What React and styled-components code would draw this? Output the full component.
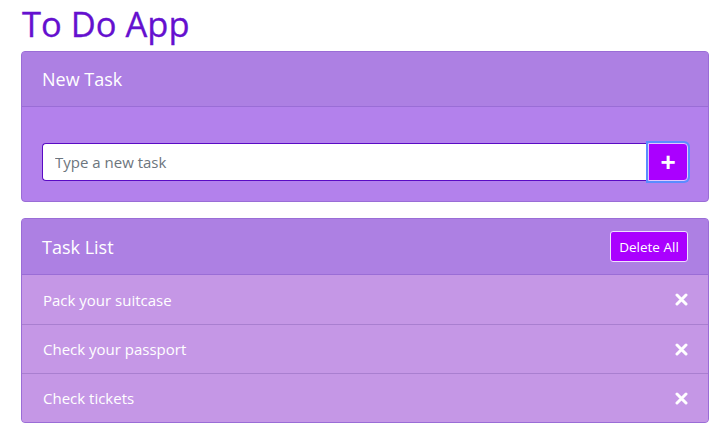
import styled, { createGlobalStyle } from "styled-components"

const Global = createGlobalStyle`
  body {
    margin: 0;
    font-family: "Open Sans", "Noto Sans", sans-serif;
    background: #fff;
  }
  * { box-sizing: border-box; }
`

const Page = styled.div`
  padding: 0 15px 0 21px;
  width: 724px;
`

const Title = styled.h1`
  margin: 4px 0 8px 1px;
  font-size: 34.5px;
  font-weight: 400;
  line-height: 39px;
  color: #6510cf;
  -webkit-text-stroke: 0.3px #6510cf;
`

const Card = styled.div`
  border: 1px solid #9a6dd6;
  border-radius: 4px;
  background: #b381ec;
  margin-bottom: 16px;
  overflow: hidden;
`

const CardHeader = styled.div`
  display: flex;
  align-items: center;
  justify-content: space-between;
  height: ${p => (p.$tall ? "56px" : "55px")};
  padding: 0 20px;
  background: #ad80e3;
  border-bottom: 1px solid #9a6dd6;
  color: #fff;
  font-size: 18px;
`

const CardBody = styled.div`
  display: flex;
  padding: 36px 20px 20px;
`

const Input = styled.input`
  flex: 1;
  height: 38px;
  border: 1px solid #5a0bc4;
  border-right: none;
  border-radius: 4px 0 0 4px;
  padding: 0 12px;
  font: inherit;
  font-size: 15px;
  outline: none;
  &::placeholder { color: #6c757d; }
`

const AddButton = styled.button`
  width: 40px;
  height: 38px;
  border: 1px solid #e0c8ff;
  border-radius: 0 4px 4px 0;
  background: #aa00ff;
  color: #fff;
  font-size: 26px;
  font-weight: 700;
  line-height: 1;
  display: flex;
  align-items: center;
  justify-content: center;
  box-shadow: 0 0 0 2px #5b8cff;
  position: relative;
  z-index: 1;
  padding: 0;
`

const DeleteButton = styled.button`
  height: 31px;
  width: 78px;
  padding: 0;
  border: 1px solid #f0e0ff;
  border-radius: 3px;
  background: #aa00ff;
  color: #fff;
  font: inherit;
  font-size: 13.5px;
`

const List = styled.ul`
  list-style: none;
  margin: 0;
  padding: 0;
`

const Item = styled.li`
  display: flex;
  align-items: center;
  justify-content: space-between;
  height: 49px;
  padding: 0 20px 0 21px;
  background: #c597e6;
  color: #fff;
  font-size: 15px;
  border-top: ${p => (p.$first ? "none" : "1px solid #a97fd0")};
`

const Remove = styled.span`
  display: flex;
  color: #fff;
`

const tasks = ["Pack your suitcase", "Check your passport", "Check tickets"]

export default function App() {
  return (
    <Page>
      <Global />
      <Title>To Do App</Title>
      <Card>
        <CardHeader>New Task</CardHeader>
        <CardBody>
          <Input placeholder="Type a new task" />
          <AddButton>+</AddButton>
        </CardBody>
      </Card>
      <Card>
        <CardHeader $tall>
          Task List
          <DeleteButton>Delete All</DeleteButton>
        </CardHeader>
        <List>
          {tasks.map((t, i) => (
            <Item key={t} $first={i === 0}>
              {t}
              <Remove>
                <svg width="13" height="13" viewBox="0 0 13 13">
                  <path d="M2 2L11 11M11 2L2 11" stroke="#fff" strokeWidth="3" strokeLinecap="round" />
                </svg>
              </Remove>
            </Item>
          ))}
        </List>
      </Card>
    </Page>
  )
}
